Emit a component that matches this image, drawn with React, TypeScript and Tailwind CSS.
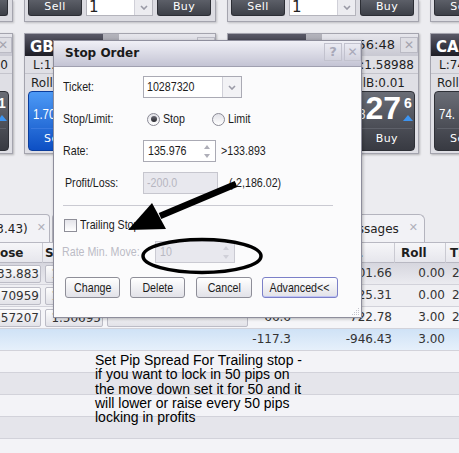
import React from "react";

const verdana = "font-['DejaVu_Sans',Verdana,sans-serif]";
const arial = "font-['Liberation_Sans',Arial,sans-serif]";

// the dialog font in the shot is a narrow Arial; squeeze Liberation Sans to match
function T({ children, className = "origin-left" }: { children: React.ReactNode; className?: string }) {
  return <span className={`inline-block whitespace-nowrap scale-x-[0.82] ${className}`}>{children}</span>;
}

type Price = [string, string, string];

interface TileProps {
  pair: string;
  time: string;
  low: string;
  high: string;
  rollS: string;
  rollB: string;
  sell: Price;
  buy: Price;
  blue?: boolean;
}

const tiles: TileProps[] = [
  { pair: "EUR/USD", time: "15:56:48", low: "L:1.35320", high: "H:1.36120", rollS: "RollS:-0.05", rollB: "RollB:0.01", sell: ["1.35", "74", "2"], buy: ["1.35", "76", "1"] },
  { pair: "GBP/CHF", time: "15:56:48", low: "L:1.70112", high: "H:1.71020", rollS: "RollS:-0.15", rollB: "RollB:0.02", sell: ["1.70", "58", "3"], buy: ["1.70", "63", "3"], blue: true },
  { pair: "GBP/USD", time: "15:56:48", low: "L:1.58120", high: "H:1.58988", rollS: "RollS:-0.11", rollB: "RollB:0.01", sell: ["1.58", "24", "6"], buy: ["1.58", "27", "6"] },
  { pair: "CAD/JPY", time: "15:56:48", low: "L:74.120", high: "H:74.950", rollS: "RollS:0.05", rollB: "RollB:-0.09", sell: ["74.", "81", "2"], buy: ["74.", "85", "1"] },
];

function DarkBtn({ children }: { children: React.ReactNode }) {
  return (
    <div
      className={`w-[54px] h-[16px] rounded-b-[3px] border border-t-0 border-[#2c2e35] bg-gradient-to-b from-[#5c5f68] to-[#3d4048] text-white text-center text-[11px] leading-[13px] tracking-[0.4px] ${verdana}`}
    >
      {children}
    </div>
  );
}

function TopTile() {
  return (
    <div className="w-[192px] h-[22px] shrink-0 bg-[#dcdce2] border-x border-b border-[#a4a4ae] shadow-[1px_1px_2px_rgba(0,0,0,0.2)] flex gap-[4px] pl-[3px]">
      <DarkBtn>Sell</DarkBtn>
      <div className="w-[67px] h-[16px] bg-white border border-t-0 border-[#b4b4bc] flex">
        <span className={`flex-1 pl-[2px] text-[15px] leading-[15px] text-[#222] ${verdana}`}>1</span>
        <span className="w-[18px] bg-[#ececf0] border-l border-[#d0d0d8] flex items-center justify-center">
          <svg width="8" height="5" viewBox="0 0 8 5">
            <polyline points="1,1 4,4 7,1" fill="none" stroke="#9a9aa6" strokeWidth="1.6" />
          </svg>
        </span>
      </div>
      <DarkBtn>Buy</DarkBtn>
    </div>
  );
}

function PriceBtn({ label, price, blue, side }: { label: string; price: Price; blue?: boolean; side: "sell" | "buy" }) {
  const [pre, big, sup] = price;
  return (
    <div
      className={`w-[88px] h-[60px] rounded-[4px] border flex flex-col ${
        blue
          ? "border-[#0b3d9c] bg-gradient-to-b from-[#4d9af6] to-[#0d4fc4]"
          : "border-[#2e3037] bg-gradient-to-b from-[#6a6d76] to-[#383a42]"
      }`}
    >
      <div className={`h-[36px] flex items-start text-white ${side === "sell" ? "pl-[4px]" : "justify-end pr-[1px]"}`}>
        <span className={`w-[22px] text-[14px] leading-[14px] mt-[15px] ${arial}`}>
          <T>{pre}</T>
        </span>
        <span className={`${arial} font-bold text-[32px] leading-[32px]`}>{big}</span>
        <div className="w-[10px] ml-[2px] mt-[5px] flex flex-col items-center">
          <span className={`${arial} font-bold text-[14px] leading-[12px]`}>{sup}</span>
          <span className="mt-[6px] w-0 h-0 border-x-[5px] border-x-transparent border-b-[6px] border-b-[#3d94f0]" />
        </div>
      </div>
      <div className={`h-px mx-[2px] ${blue ? "bg-[#3a7ae0]" : "bg-[#5e616a]"}`} />
      <div
        className={`flex-1 flex items-center text-white text-[11px] tracking-[0.4px] ${verdana} ${
          side === "sell" ? "pl-[15px]" : "justify-end pr-[16px]"
        }`}
      >
        {label}
      </div>
    </div>
  );
}

function Tile(t: TileProps) {
  return (
    <div className={`w-[192px] h-[121px] shrink-0 bg-[#dfdfe5] border border-[#a4a4ae] shadow-[1px_1px_2px_rgba(0,0,0,0.25)] flex flex-col ${verdana}`}>
      <div className="h-[22px] flex">
        <div className="w-[78px] bg-gradient-to-b from-[#5a5a68] to-[#1e1e26] text-white font-bold text-[15px] leading-[22px] pt-[2px] pl-[5px] whitespace-nowrap overflow-hidden">
          {t.pair}
        </div>
        <div className="w-[16px] bg-gradient-to-b from-[#b4b4bc] to-[#8c8c96]" />
        <div className="flex-1 bg-gradient-to-b from-[#e6e6ec] to-[#c8c8d2] flex items-center justify-end">
          <span className="text-[13px] text-[#1e1e1e] mr-[5px]">{t.time}</span>
          <div className="w-[18px] h-[16px] border border-[#babac4] bg-[#dedee4] flex items-center justify-center text-[#a4a4ae] text-[12px] font-bold">
            ✕
          </div>
        </div>
      </div>
      <div className="h-[18px] border-b border-[#c4c4cc] flex items-center justify-between pl-[8px] pr-[4px] text-[12px] text-[#1e1e1e]">
        <span>{t.low}</span>
        <span>{t.high}</span>
      </div>
      <div className="h-[17px] flex items-center justify-between pl-[6px] pr-[13px] text-[12px] text-[#1e1e1e]">
        <span>{t.rollS}</span>
        <span>{t.rollB}</span>
      </div>
      <div className="flex justify-between pl-[3px] pr-[3px]">
        <PriceBtn label="Sell" price={t.sell} blue={t.blue} side="sell" />
        <PriceBtn label="Buy" price={t.buy} side="buy" />
      </div>
    </div>
  );
}

const cols = "grid grid-cols-[73px_62px_145px_45px_100px_51px_60px]";

function CellBtn({ children }: { children?: React.ReactNode }) {
  return (
    <div className="m-[2px] h-[18px] rounded-[2px] border border-[#bcbcc6] bg-gradient-to-b from-[#fdfdfd] to-[#e2e2e8] text-right pr-[1px] leading-[16px] whitespace-nowrap overflow-hidden">
      {children}
    </div>
  );
}

type Row = { a?: string; b?: string; c?: string; d?: string; e?: string; f?: string; g?: string; btn?: boolean; bg: string };

const rows: Row[] = [
  { a: "133.883", b: "1.33893", c: "", d: "-200.0", e: "-1,201.66", f: "0.00", g: "2/11 10:02", btn: true, bg: "bg-gradient-to-b from-[#d6d6de] to-[#ebebf0]" },
  { a: "1.70959", b: "1.71532", c: "", d: "-95.0", e: "-1,325.31", f: "0.00", g: "2/11 10:05", btn: true, bg: "bg-[#efeff3]" },
  { a: "1.57207", b: "1.50695", c: "", d: "-66.6", e: "-722.78", f: "3.00", g: "2/10 14:31", btn: true, bg: "bg-[#f5f5f8]" },
  { d: "-117.3", e: "-946.43", f: "3.00", bg: "bg-gradient-to-b from-[#cfe2f6] to-[#e6f0fb]" },
  { bg: "bg-[#f3f3f7]" },
  { bg: "bg-[#e5e5eb]" },
  { bg: "bg-[#f3f3f7]" },
  { bg: "bg-[#e5e5eb]" },
  { bg: "bg-[#f3f3f7]" },
];

function Table() {
  return (
    <div className={`ml-[-30px] text-[12px] text-[#333] ${verdana}`}>
      <div className={`${cols} h-[21px] bg-gradient-to-b from-[#f6f6f9] to-[#e6e6ec] border-t border-b border-[#b8b8c2] font-bold text-[#1e1e1e] leading-[20px]`}>
        <div className="pl-[17px] border-r border-[#cacad2]">Close</div>
        <div className="pl-[2px] border-r border-[#cacad2]">Stop</div>
        <div className="pl-[4px] border-r border-[#cacad2]">Limit</div>
        <div className="pl-[4px] border-r border-[#cacad2]">P/L</div>
        <div className="pl-[4px] border-r border-[#cacad2]">Gross P/L</div>
        <div className="pl-[6px] border-r border-[#cacad2]">Roll</div>
        <div className="pl-[4px]">Time</div>
      </div>
      {rows.map((r, i) => (
        <div key={i} className={`${cols} h-[22px] border-b border-[#d2d2da] leading-[21px] ${r.bg}`}>
          <div>{r.btn ? <CellBtn>{r.a}</CellBtn> : null}</div>
          <div>{r.btn ? <CellBtn>{r.b}</CellBtn> : null}</div>
          <div>{r.btn ? <CellBtn>{r.c}</CellBtn> : null}</div>
          <div className="text-right pr-[4px] whitespace-nowrap">{r.d}</div>
          <div className="text-right pr-[3px] whitespace-nowrap">{r.e}</div>
          <div className="text-right pr-[1px] whitespace-nowrap">{r.f}</div>
          <div className="pl-[6px] whitespace-nowrap">{r.g}</div>
        </div>
      ))}
    </div>
  );
}

function Tabs() {
  return (
    <div className={`flex items-end h-[29px] ml-[-30px] text-[12px] text-[#222] ${verdana}`}>
      <div className="w-[80px] h-[28px] shrink-0 bg-[#f2f2f6] border border-b-0 border-[#b4b4be] rounded-tr-[4px] flex items-center justify-end pr-[3px] gap-[9px] whitespace-nowrap">
        <span>(-2,733.43)</span>
        <span className="text-[#b0b0ba] text-[11px] font-bold">✕</span>
      </div>
      <div className="w-[236px] h-[28px] shrink-0 ml-[2px] bg-[#e6e6ec] border border-b-0 border-[#b4b4be] rounded-t-[4px] flex items-center pl-[8px]">
        Orders
      </div>
      <div className="w-[135px] h-[28px] shrink-0 ml-[2px] bg-[#f2f2f6] border border-b-0 border-[#b4b4be] rounded-tr-[6px] flex items-center justify-end pr-[6px] gap-[10px]">
        <span>Messages</span>
        <span className="text-[#b0b0ba] text-[11px] font-bold">✕</span>
      </div>
    </div>
  );
}

function Spinner({ light }: { light?: boolean }) {
  const c = light ? "border-b-[#d0d0d8]" : "border-b-[#aeaeb8]";
  const d = light ? "border-t-[#d0d0d8]" : "border-t-[#aeaeb8]";
  return (
    <div className="flex flex-col items-center gap-[5px] mr-[5px]">
      <span className={`w-0 h-0 border-x-[3px] border-x-transparent border-b-[4px] ${c}`} />
      <span className={`w-0 h-0 border-x-[3px] border-x-transparent border-t-[4px] ${d}`} />
    </div>
  );
}

function Radio({ checked }: { checked?: boolean }) {
  return (
    <span className="w-[13px] h-[13px] shrink-0 rounded-full border border-[#8a8a96] bg-gradient-to-b from-[#e2e2e8] to-[#ffffff] flex items-center justify-center">
      {checked && <span className="w-[6px] h-[6px] rounded-full bg-gradient-to-b from-[#6a6a74] to-[#2a2a30]" />}
    </span>
  );
}

function DlgButton({ w, children, accent }: { w: string; children: React.ReactNode; accent?: boolean }) {
  return (
    <div
      className={`${w} h-[21px] rounded-[3px] border flex items-center justify-center bg-gradient-to-b from-[#ffffff] to-[#e2e2e8] ${
        accent ? "border-[#7c80c8] shadow-[inset_0_-1px_0_#c0c4f4]" : "border-[#8e8e98]"
      }`}
    >
      <T className="origin-center">{children}</T>
    </div>
  );
}

function Dialog() {
  return (
    <div className={`absolute left-[53px] top-[40px] w-[309px] h-[278px] border border-[#8e8e9c] bg-[#fbfbfc] flex flex-col shadow-[1px_1px_3px_rgba(0,0,0,0.25)] text-[13px] text-[#1c1c1c] ${arial}`}>
      <div className="h-[26px] shrink-0 bg-gradient-to-b from-[#f0f0f6] to-[#c4c4d4] border-b border-[#a0a0b0] flex items-start pt-[2px] pl-[11px]">
        <span className="font-['DejaVu_Sans',sans-serif] font-bold text-[12px] leading-[20px] text-[#1a1a1a]">Stop Order</span>
        <div className="ml-auto flex gap-[2px]">
          <div className="w-[18px] h-[18px] border border-[#c2c2ce] bg-gradient-to-b from-[#eaeaf2] to-[#d2d2de] flex items-center justify-center text-[#a8a8b8] font-bold text-[13px] font-['DejaVu_Sans',sans-serif]">
            ?
          </div>
          <div className="w-[17px] h-[18px] border border-[#c2c2ce] bg-gradient-to-b from-[#eaeaf2] to-[#d2d2de] flex items-center justify-center text-[#a8a8b8] font-bold text-[12px] font-['DejaVu_Sans',sans-serif]">
            ✕
          </div>
        </div>
      </div>

      <div className="flex flex-col pl-[9px] pt-[9px]">
        <div className="flex flex-col gap-[10px]">
          <div className="h-[22px] flex items-center">
            <span className="w-[80px]">
              <T>Ticket:</T>
            </span>
            <div className="w-[99px] h-[22px] border border-[#aaaab4] bg-white flex items-center">
              <span className="flex-1 pl-[3px]">
                <T>10287320</T>
              </span>
              <span className="w-[19px] h-full border-l border-[#d0d0d8] bg-[#f2f2f5] flex items-center justify-center">
                <svg width="8" height="5" viewBox="0 0 8 5">
                  <polyline points="1,1 4,4 7,1" fill="none" stroke="#9a9aa6" strokeWidth="1.6" />
                </svg>
              </span>
            </div>
          </div>
          <div className="h-[22px] flex items-center">
            <span className="w-[80px]">
              <T>Stop/Limit:</T>
            </span>
            <div className="w-[69px] flex items-center gap-[3px] pl-[4px]">
              <Radio checked />
              <T>Stop</T>
            </div>
            <div className="flex items-center gap-[3px]">
              <Radio />
              <T>Limit</T>
            </div>
          </div>
          <div className="h-[22px] flex items-center">
            <span className="w-[80px]">
              <T>Rate:</T>
            </span>
            <div className="w-[73px] h-[22px] border border-[#aaaab4] bg-white flex items-center">
              <span className="flex-1 pl-[4px]">
                <T>135.976</T>
              </span>
              <Spinner />
            </div>
            <span className="ml-[5px]">
              <T>&gt;133.893</T>
            </span>
          </div>
          <div className="h-[22px] flex items-center">
            <span className="w-[80px] pl-[2px]">
              <T>Profit/Loss:</T>
            </span>
            <div className="w-[75px] h-[22px] border border-[#c6c6ce] bg-[#e8e8ee] flex items-center">
              <span className="pl-[3px] text-[#b6b6c0]">
                <T>-200.0</T>
              </span>
            </div>
            <span className="ml-[11px]">
              <T>(-2,186.02)</T>
            </span>
          </div>
        </div>

        <div className="mt-[11px] w-[270px] h-px bg-[#cacad2]" />

        <div className="mt-[8px] h-[22px] flex items-center gap-[3px] pl-[1px]">
          <span className="w-[13px] h-[13px] border border-[#8e8e98] bg-gradient-to-b from-[#e4e4ea] to-[#ffffff]" />
          <T>Trailing Stop</T>
        </div>

        <div className="mt-[5px] h-[22px] flex items-center ml-[-1px]">
          <span className="w-[93px] text-[#bcbcc6]">
            <T>Rate Min. Move:</T>
          </span>
          <div className="w-[80px] h-[22px] border border-[#cacad2] bg-[#e8e8ee] flex items-center">
            <span className="flex-1 pl-[4px] text-[#b8b8c2]">
              <T>10</T>
            </span>
            <Spinner light />
          </div>
        </div>

        <div className="mt-[14px] flex gap-[10px] pl-[2px]">
          <DlgButton w="w-[55px]">Change</DlgButton>
          <DlgButton w="w-[55px]">Delete</DlgButton>
          <div className="ml-[1px]">
            <DlgButton w="w-[56px]">Cancel</DlgButton>
          </div>
          <DlgButton w="w-[76px]" accent>
            Advanced&lt;&lt;
          </DlgButton>
        </div>
      </div>

      <svg className="absolute right-[1px] bottom-[1px]" width="9" height="9" viewBox="0 0 9 9">
        <g fill="#c4c4cc">
          <rect x="7" y="1" width="1" height="1" />
          <rect x="5" y="3" width="1" height="1" />
          <rect x="7" y="3" width="1" height="1" />
          <rect x="3" y="5" width="1" height="1" />
          <rect x="5" y="5" width="1" height="1" />
          <rect x="7" y="5" width="1" height="1" />
          <rect x="1" y="7" width="1" height="1" />
          <rect x="3" y="7" width="1" height="1" />
          <rect x="5" y="7" width="1" height="1" />
          <rect x="7" y="7" width="1" height="1" />
        </g>
      </svg>
    </div>
  );
}

export default function App() {
  return (
    <div className="relative w-[459px] h-[453px] overflow-hidden bg-[#ececf0]">
      <div className="flex gap-[11px] ml-[-179px]">
        <TopTile />
        <TopTile />
        <TopTile />
        <TopTile />
      </div>
      <div className="flex gap-[11px] ml-[-179px] mt-[11px]">
        {tiles.map((t) => (
          <Tile key={t.pair} {...t} />
        ))}
      </div>
      <div className="mt-[59px]">
        <Tabs />
        <Table />
      </div>

      <Dialog />

      {/* annotation drawn on top of the screenshot */}
      <svg className="absolute left-0 top-0 pointer-events-none" width="459" height="453" viewBox="0 0 459 453">
        <line x1="236" y1="184" x2="160" y2="216" stroke="#000" strokeWidth="6.5" />
        <polygon points="128,230 152,203 166,229" fill="#000" />
        <ellipse cx="202" cy="256" rx="59" ry="16.5" fill="none" stroke="#000" strokeWidth="3.5" />
      </svg>

      <div className={`absolute left-[95px] top-[353px] text-[14px] leading-[14.3px] text-black ${arial}`}>
        Set Pip Spread For Trailing stop -
        <br />
        if you want to lock in 50 pips on
        <br />
        the move down set it for 50 and it
        <br />
        will lower or raise every 50 pips
        <br />
        locking in profits
      </div>
    </div>
  );
}
